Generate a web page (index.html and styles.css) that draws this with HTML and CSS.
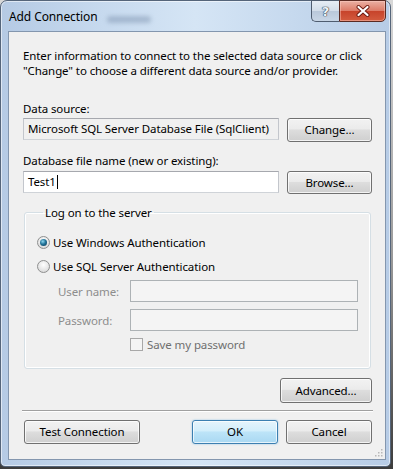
FILE: index.html
```html
<!DOCTYPE html>
<html lang="en">
<head>
    <meta charset="UTF-8">
    <meta name="viewport" content="width=device-width, initial-scale=1.0">
    <title>Add Connection</title>
    <link rel="stylesheet" href="styles.css">
</head>
<body>
    <div class="window">
        <div class="titlebar">
            <span class="title">Add Connection</span>
            <span class="ghost"></span>
            <div class="captionButtons">
                <button class="capButton help">?</button>
                <button class="capButton close">
                    <svg width="14" height="12" viewBox="0 0 14 12">
                        <path d="M2.5 2 L11.5 10 M11.5 2 L2.5 10" stroke="#6b1a10" stroke-width="4" stroke-linecap="round"/>
                        <path d="M2.5 2 L11.5 10 M11.5 2 L2.5 10" stroke="#ffffff" stroke-width="2.2" stroke-linecap="round"/>
                    </svg>
                </button>
            </div>
        </div>

        <div class="client">
            <p class="intro">Enter information to connect to the selected data source or click<br>"Change" to choose a different data source and/or provider.</p>

            <div class="fieldLabel first">Data source:</div>
            <div class="fieldRow">
                <div class="textbox readonly">Microsoft SQL Server Database File (SqlClient)</div>
                <button class="button">Change...</button>
            </div>

            <div class="fieldLabel">Database file name (new or existing):</div>
            <div class="fieldRow second">
                <div class="textbox">Test1<span class="caret"></span></div>
                <button class="button">Browse...</button>
            </div>

            <fieldset class="group">
                <legend>Log on to the server</legend>
                <div class="radioRow"><span class="radio checked"></span>Use Windows Authentication</div>
                <div class="radioRow"><span class="radio"></span>Use SQL Server Authentication</div>
                <div class="credRow">
                    <span class="credLabel">User name:</span>
                    <div class="textbox disabled"></div>
                </div>
                <div class="credRow">
                    <span class="credLabel">Password:</span>
                    <div class="textbox disabled"></div>
                </div>
                <div class="checkRow"><span class="checkbox"></span>Save my password</div>
            </fieldset>

            <div class="advancedRow">
                <button class="button advanced">Advanced...</button>
            </div>

            <div class="separator"></div>

            <div class="footer">
                <button class="button testButton">Test Connection</button>
                <button class="button okButton">OK</button>
                <button class="button cancelButton">Cancel</button>
            </div>

            <svg class="grip" width="10" height="10" viewBox="0 0 10 10">
                <rect x="8" y="2" width="1.5" height="1.5" fill="#b8b8b8"/>
                <rect x="5" y="5" width="1.5" height="1.5" fill="#b8b8b8"/>
                <rect x="8" y="5" width="1.5" height="1.5" fill="#b8b8b8"/>
                <rect x="2" y="8" width="1.5" height="1.5" fill="#b8b8b8"/>
                <rect x="5" y="8" width="1.5" height="1.5" fill="#b8b8b8"/>
                <rect x="8" y="8" width="1.5" height="1.5" fill="#b8b8b8"/>
            </svg>
        </div>
    </div>
</body>
</html>
```

FILE: styles.css
```css
* {
    box-sizing: border-box;
}
body {
    margin: 0;
    background: linear-gradient(#d8d8d8, #9a9a9a 55%, #3c3c3c);
    font-family: 'Noto Sans', sans-serif;
    font-size: 11.5px;
    letter-spacing: -0.1px;
    color: #000;
    height: 469px;
    overflow: hidden;
}
.window {
    width: 391px;
    height: 467px;
    display: flex;
    flex-direction: column;
    border: 1px solid #55657a;
    border-radius: 7px 7px 5px 5px;
    padding: 0 4px 6px 7px;
    background: linear-gradient(90deg, #b5cae4 0%, #c6d9ee 25%, #d5e5f5 50%, #c6d9ee 75%, #b7cce6 100%);
    box-shadow: inset 0 0 0 1px rgba(255, 255, 255, 0.55);
}
.titlebar {
    height: 30px;
    display: flex;
    align-items: flex-start;
}
.title {
    margin: 8px 0 0 1px;
    font-size: 12px;
    line-height: 16px;
    color: #000;
}
.ghost {
    width: 44px;
    height: 7px;
    margin: 15px 0 0 10px;
    background: rgba(95, 118, 150, 0.35);
    border-radius: 4px;
    filter: blur(2px);
}
.captionButtons {
    margin-left: auto;
    margin-top: -1px;
    display: flex;
}
.capButton {
    height: 22px;
    border: 1px solid #4f5d70;
    padding: 0;
    display: flex;
    align-items: center;
    justify-content: center;
}
.help {
    width: 28px;
    border-right: none;
    border-radius: 0 0 0 5px;
    background: linear-gradient(#e6edf5, #d2dde9 50%, #b9c8da 51%, #c8d6e6);
    font-family: 'DejaVu Sans', sans-serif;
    font-weight: bold;
    font-size: 13px;
    color: #eef3f8;
    text-shadow: 0 0 1px #2c3a4c, 0 0 1px #2c3a4c, 0 0 1px #2c3a4c;
}
.close {
    width: 47px;
    border-radius: 0 0 5px 0;
    border-color: #5a2a22;
    background: linear-gradient(#eab0a3, #dc7a66 50%, #c7432b 51%, #d35c3f);
    box-shadow: inset 0 0 0 1px rgba(255, 210, 200, 0.45);
}
.client {
    position: relative;
    flex: 1;
    background: #f0f0f0;
    border: 1px solid #8396ae;
    padding: 16px 13px 0 14px;
}
.intro {
    margin: 0;
    line-height: 15px;
}
.fieldLabel {
    line-height: 15px;
    margin-top: 11px;
}
.fieldLabel.first {
    margin-top: 23px;
}
.fieldRow {
    display: grid;
    grid-template-columns: 256px 1fr;
    column-gap: 8px;
    height: 24px;
    margin-top: 2px;
}
.fieldRow.second {
    height: 23px;
    margin-top: 3px;
}
.textbox {
    display: flex;
    align-items: center;
    padding: 0 4px 1px;
    background: #fff;
    border: 1px solid #abadb3;
    border-color: #a6a8ae #c3c6cc #cfd3d8 #c3c6cc;
    white-space: nowrap;
}
.fieldRow .textbox {
    height: 22px;
}
.fieldRow:first-of-type .textbox {
    align-self: end;
    height: 23px;
}
.textbox.readonly {
    background: #f0f0f0;
    padding-left: 4px;
}
.caret {
    display: inline-block;
    width: 1px;
    height: 14px;
    margin-left: 1px;
    background: #000;
}
.button {
    font-family: inherit;
    font-size: inherit;
    letter-spacing: inherit;
    color: #000;
    padding: 0 0 1px;
    border: 1px solid #707070;
    border-radius: 3px;
    background: linear-gradient(#f2f2f2 0%, #ebebeb 45%, #dddddd 50%, #cfcfcf 100%);
    box-shadow: inset 0 0 0 1px rgba(255, 255, 255, 0.75);
}
.group {
    margin: 11px 1px 0;
    padding: 14px 12px 17px;
    border: 1px solid #d5dfe5;
    border-radius: 3px;
    box-shadow: inset 0 0 0 1px #fff;
}
.group legend {
    margin-left: 6px;
    padding: 0 2px;
    line-height: 15px;
}
.radioRow {
    display: flex;
    align-items: center;
    gap: 3px;
    height: 16px;
}
.radioRow + .radioRow {
    margin-top: 8px;
}
.radio {
    position: relative;
    width: 13px;
    height: 13px;
    border-radius: 50%;
    border: 1px solid #8e8f8f;
    background: radial-gradient(circle at 50% 35%, #ffffff, #e4e4e4 60%, #cfcfcf);
}
.radio.checked::after {
    content: '';
    position: absolute;
    left: 2px;
    top: 2px;
    width: 7px;
    height: 7px;
    border-radius: 50%;
    background: radial-gradient(circle at 40% 35%, #8fd6ef 0%, #22759a 45%, #0a3450 100%);
}
.credRow {
    display: grid;
    grid-template-columns: 93px 1fr;
    align-items: center;
    height: 22px;
    margin-top: 6px;
}
.credRow + .credRow {
    margin-top: 7px;
}
.credLabel {
    padding-left: 21px;
    color: #8d8d8d;
}
.textbox.disabled {
    height: 22px;
    background: #f4f4f4;
    border: 1px solid #adb2b5;
}
.checkRow {
    display: flex;
    align-items: center;
    gap: 4px;
    height: 13px;
    margin: 7px 0 0 93px;
    color: #6f6f6f;
}
.checkbox {
    width: 13px;
    height: 13px;
    border: 1px solid #a8a8a8;
    background: #f4f4f4;
}
.advancedRow {
    display: flex;
    justify-content: flex-end;
    margin-top: 9px;
}
.advanced {
    width: 92px;
    height: 25px;
}
.separator {
    margin: 7px -1px 0;
    border-top: 1px solid #a0a0a0;
    border-bottom: 1px solid #ffffff;
}
.footer {
    display: flex;
    gap: 8px;
    height: 24px;
    margin-top: 8px;
}
.testButton {
    width: 116px;
    margin-left: 1px;
    margin-right: auto;
}
.okButton {
    width: 86px;
    border-color: #3c7fb1;
    background: linear-gradient(#e5f4fc 0%, #d3eefb 45%, #bde4f8 50%, #a9d8f2 100%);
    box-shadow: inset 0 0 0 1px rgba(255, 255, 255, 0.7), 0 0 2px rgba(70, 160, 220, 0.6);
}
.cancelButton {
    width: 86px;
}
.grip {
    position: absolute;
    right: 2px;
    bottom: 2px;
}
```
